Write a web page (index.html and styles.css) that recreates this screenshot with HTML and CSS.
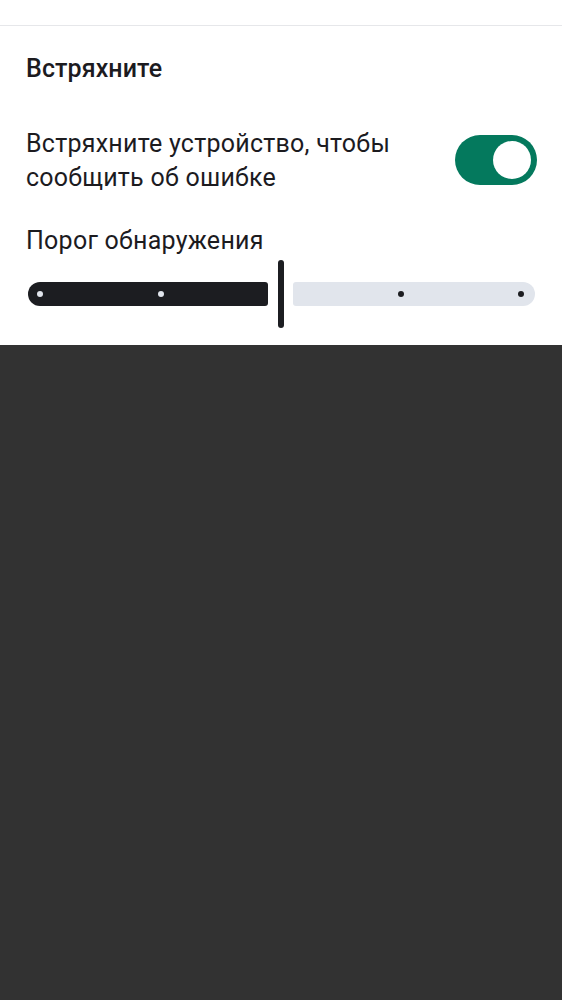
FILE: index.html
```html
<!DOCTYPE html>
<html lang="ru">
<head>
<meta charset="utf-8">
<link rel="stylesheet" href="styles.css">
</head>
<body>
<div class="sheet">
  <div class="topbar"></div>
  <div class="content">
    <h2 class="title">Встряхните</h2>
    <div class="row">
      <p class="row-text">Встряхните устройство, чтобы сообщить об ошибке</p>
      <div class="switch on"><div class="switch-thumb"></div></div>
    </div>
    <div class="label">Порог обнаружения</div>
    <div class="slider">
      <div class="track active"></div>
      <div class="thumb"></div>
      <div class="track inactive"></div>
      <span class="tick light t0"></span>
      <span class="tick light t1"></span>
      <span class="tick dark t3"></span>
      <span class="tick dark t4"></span>
    </div>
  </div>
</div>
</body>
</html>
```
FILE: styles.css
```css
html, body {
  margin: 0;
  padding: 0;
  background: #323232;
  height: 100%;
}
body {
  font-family: Roboto, "Noto Sans", sans-serif;
  color: #1c1b1f;
}
.sheet {
  background: #ffffff;
}
.topbar {
  height: 25px;
  border-bottom: 1px solid #e6e7ea;
}
.content {
  padding: 26px 25px 17px 26px;
}
.title {
  margin: 0;
  font-size: 25px;
  font-weight: 500;
  line-height: 33px;
  letter-spacing: 0.1px;
}
.row {
  display: flex;
  align-items: flex-start;
  margin-top: 42px;
}
.row-text {
  flex: 1;
  margin: 0;
  font-size: 25px;
  line-height: 34px;
  letter-spacing: 0.25px;
  padding-right: 30px;
}
.switch {
  width: 82px;
  height: 50px;
  border-radius: 25px;
  background: #04795d;
  margin-top: 8px;
  display: flex;
  align-items: center;
  justify-content: flex-end;
  padding: 0 6px;
  box-sizing: border-box;
}
.switch-thumb {
  width: 38px;
  height: 38px;
  border-radius: 50%;
  background: #ffffff;
}
.label {
  margin-top: 29px;
  font-size: 25px;
  line-height: 34px;
  letter-spacing: 0.25px;
}
.slider {
  position: relative;
  display: flex;
  align-items: center;
  height: 68px;
  margin: 2px 2px 0 2px;
}
.track {
  height: 24px;
}
.track.active {
  width: 240px;
  background: #1c1d21;
  border-radius: 12px 3px 3px 12px;
}
.thumb {
  width: 6px;
  height: 68px;
  border-radius: 3px;
  background: #1c1d21;
  margin: 0 9px 0 10px;
}
.track.inactive {
  flex: 1;
  background: #e1e5ec;
  border-radius: 3px 12px 12px 3px;
}
.tick {
  position: absolute;
  top: 31px;
  width: 6px;
  height: 6px;
  border-radius: 50%;
  margin-left: -3px;
}
.tick.light { background: #e1e5ec; }
.tick.dark { background: #1c1d21; }
.t0 { left: 12px; }
.t1 { left: 133px; }
.t3 { left: 373px; }
.t4 { left: 493px; }
```
